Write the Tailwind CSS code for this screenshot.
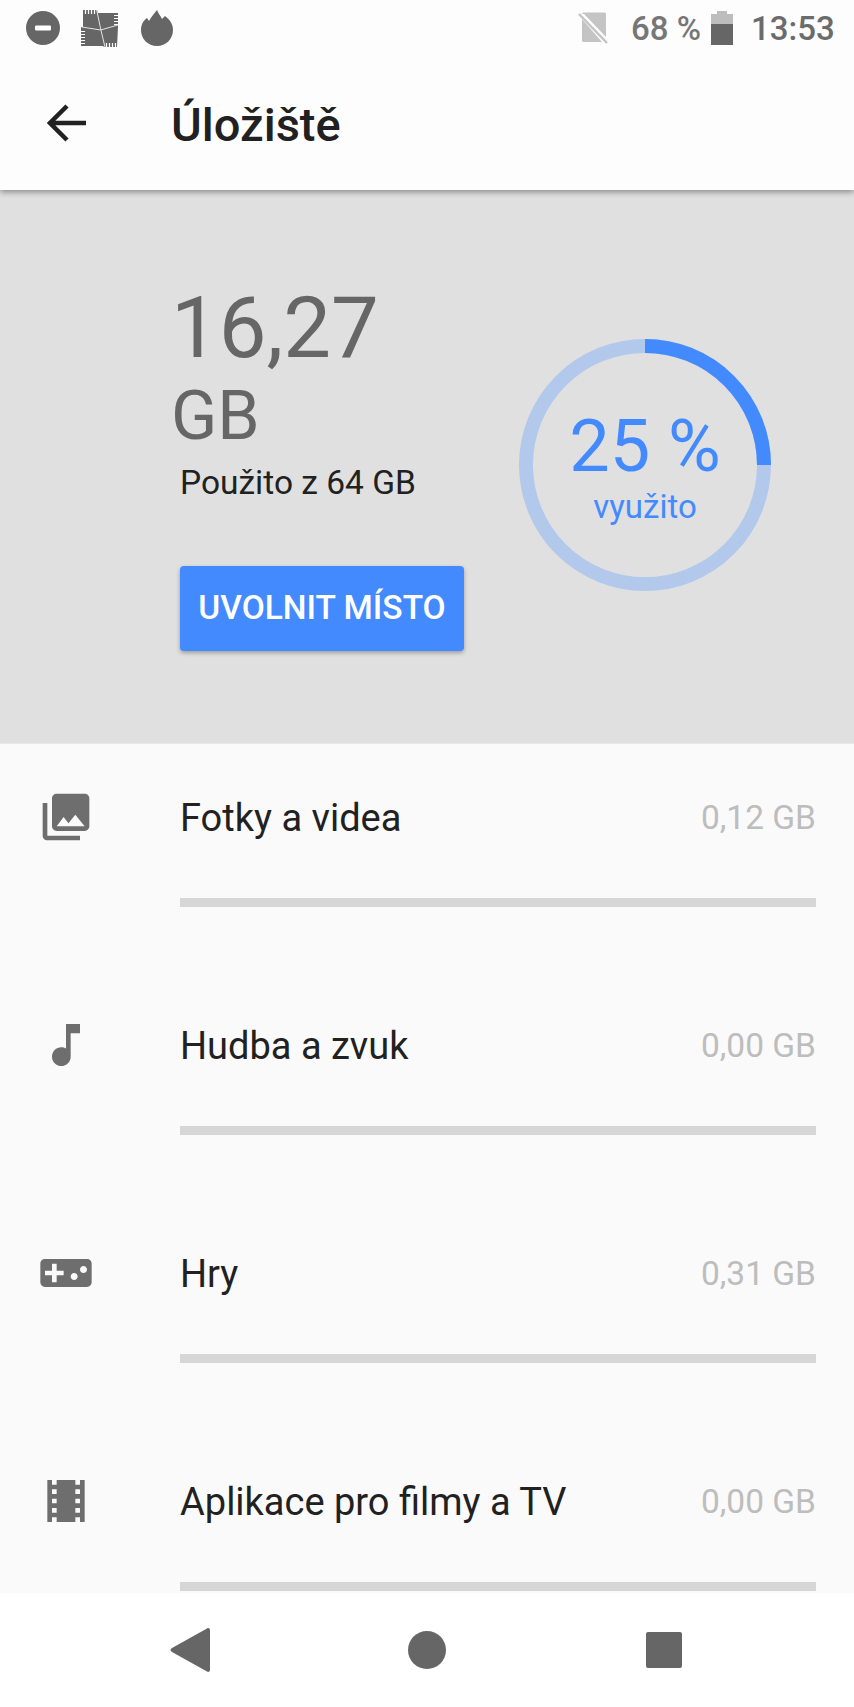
<!DOCTYPE html>
<html lang="cs">
<head>
  <meta charset="UTF-8" />
  <meta name="viewport" content="width=device-width, initial-scale=1.0" />
  <title>Úložiště</title>
  <script src="https://cdn.jsdelivr.net/npm/@tailwindcss/browser@4"></script>
</head>
<body class="bg-white font-['Roboto',sans-serif]">
  <div class="w-[854px] h-[1707px] flex flex-col overflow-hidden">

    <!-- status bar -->
    <div class="relative z-20 h-[56px] flex items-center bg-[#fdfdfd] text-[#6b6b6b]">
      <svg class="ml-[26px] w-[34px] h-[34px]" viewBox="0 0 34 34"><circle cx="17" cy="17" r="17" fill="#666"/><rect x="9" y="14.5" width="16" height="5" rx="1" fill="#fff"/></svg>
      <svg class="ml-[21px] w-[37px] h-[37px]" viewBox="0 0 37 37">
        <path d="M2 0H16L17 3H37V17L36 37H23L22 36H0V17H2Z" fill="#666"/>
        <path d="M4.500 0V4M7.500 0V4M10.500 0V4M13.500 0V4M37 5.500H33M37 8.500H33M37 11.500H33M37 14.500H33M0 21.500H4M0 24.500H4M0 27.500H4M0 30.500H4M0 33.500H4M25.500 37V33M28.500 37V33M31.500 37V33M34.500 37V33" stroke="#fdfdfd" stroke-width="1.200"/>
        <path d="M15.700 0L19.700 19L24 37M0.700 17L19.700 20L37 15" fill="none" stroke="#e4e4e4" stroke-width="1"/>
      </svg>
      <svg class="ml-[23px] w-[32px] h-[36px]" viewBox="0 0 32 36"><path d="M16 36C7 36 0 29 0 20C0 14 3 10 6 8L8 11C10 7 13 4 16 0C17 3 19 5 21 9L24 6C29 10 32 14 32 20C32 29 25 36 16 36Z" fill="#666"/></svg>
      <svg class="ml-[405px] w-[30px] h-[32px]" viewBox="0 0 30 32"><path d="M4 2C4 1 5 0.5 6 0.5H26C27 0.5 28 1 28 2V25L6 2ZM4 7L24 30H6C5 30 4 29.500 4 28.500Z" fill="#c4c4c4"/><path d="M1 2L29 31" stroke="#c4c4c4" stroke-width="2.500"/></svg>
      <span class="ml-[23px] text-[33px] font-medium leading-none text-[#767676]">68 %</span>
      <svg class="ml-[10px] w-[22px] h-[34px]" viewBox="0 0 22 34"><path d="M6 0H16V3H22V13H0V3H6Z" fill="#bdbdbd"/><rect y="13" width="22" height="21" fill="#666"/></svg>
      <span class="ml-[18px] text-[33px] font-medium leading-none">13:53</span>
    </div>

    <!-- toolbar -->
    <div class="relative z-10 h-[134px] flex items-center bg-[#fdfdfd] shadow-[0_2px_6px_rgba(0,0,0,0.4)]">
      <svg class="ml-[47px] w-[40px] h-[38px]" viewBox="0 0 40 38" fill="none" stroke="#212121" stroke-width="4.500"><path d="M39 19H4M20 2L3 19L20 36"/></svg>
      <h1 class="ml-[84px] mt-[2px] text-[47px] font-medium leading-none text-[#212121]">Úložiště</h1>
    </div>

    <!-- summary -->
    <section class="h-[554px] bg-[#e0e0e0] flex border-b border-[#e8e8e8]">
      <div class="ml-[171px] w-[348px] pt-[90px]">
        <div class="text-[85px] leading-[96px] text-[#666]">16,27</div>
        <div class="text-[68px] leading-[80px] text-[#666]">GB</div>
        <div class="ml-[9px] mt-[7px] text-[33.500px] leading-[40px] text-[#212121]">Použito z 64 GB</div>
        <button class="ml-[9px] mt-[63px] w-[284px] h-[85px] rounded bg-[#448aff] text-white text-[33.500px] font-medium shadow-[0_2px_4px_rgba(0,0,0,0.3)]">UVOLNIT MÍSTO</button>
      </div>
      <div class="relative mt-[149px] w-[252px] h-[252px] flex flex-col items-center text-[#448aff]">
        <svg class="absolute inset-0" viewBox="0 0 252 252" fill="none" stroke-width="14">
          <circle cx="126" cy="126" r="119" stroke="#b3c9ec"/>
          <path d="M126 7A119 119 0 0 1 245 126" stroke="#448aff"/>
        </svg>
        <div class="mt-[66px] text-[72px] leading-[84px]">25 %</div>
        <div class="text-[33px] leading-[40px] mt-[-2px]">využito</div>
      </div>
    </section>

    <!-- categories -->
    <main class="flex-1 overflow-hidden bg-[#fafafa]">
      <div class="h-[228px]">
        <div class="h-[146px] flex items-center">
          <svg class="ml-[38px] w-[56px] h-[56px]" viewBox="0 0 24 24" fill="#6e6e6e"><path d="M22 16V4c0-1.1-.9-2-2-2H8c-1.100 0-2 .9-2 2v12c0 1.100.9 2 2 2h12c1.100 0 2-.9 2-2zm-11-4l2.030 2.710L16 11l4 5H8l3-4zM2 6v14c0 1.100.9 2 2 2h14v-2H4V6H2z"/></svg>
          <span class="ml-[86px] mt-[2px] flex-1 text-[38px] text-[#212121]">Fotky a videa</span>
          <span class="mr-[38px] mt-[2px] text-[33.500px] text-[#bdbdbd]">0,12 GB</span>
        </div>
        <div class="ml-[180px] mr-[38px] mt-[8px] h-[9px] bg-[#d6d6d6]"></div>
      </div>
      <div class="h-[228px]">
        <div class="h-[146px] flex items-center">
          <svg class="ml-[38px] w-[56px] h-[56px]" viewBox="0 0 24 24" fill="#6e6e6e"><path d="M12 3v10.550c-.59-.34-1.270-.55-2-.55-2.210 0-4 1.790-4 4s1.790 4 4 4 4-1.790 4-4V7h4V3h-6z"/></svg>
          <span class="ml-[86px] mt-[2px] flex-1 text-[38px] text-[#212121]">Hudba a zvuk</span>
          <span class="mr-[38px] mt-[2px] text-[33.500px] text-[#bdbdbd]">0,00 GB</span>
        </div>
        <div class="ml-[180px] mr-[38px] mt-[8px] h-[9px] bg-[#d6d6d6]"></div>
      </div>
      <div class="h-[228px]">
        <div class="h-[146px] flex items-center">
          <svg class="ml-[38px] w-[56px] h-[56px]" viewBox="0 0 24 24" fill="#6e6e6e"><path d="M21 6H3c-1.100 0-2 .9-2 2v8c0 1.100.9 2 2 2h18c1.100 0 2-.9 2-2V8c0-1.100-.9-2-2-2zm-10 7H8v3H6v-3H3v-2h3V8h2v3h3v2zm4.500 2c-.83 0-1.500-.67-1.500-1.500s.67-1.500 1.500-1.500 1.500.67 1.500 1.500-.67 1.500-1.500 1.500zm4-3c-.83 0-1.500-.67-1.500-1.500S18.670 9 19.500 9s1.500.67 1.500 1.500-.67 1.500-1.500 1.500z"/></svg>
          <span class="ml-[86px] mt-[2px] flex-1 text-[38px] text-[#212121]">Hry</span>
          <span class="mr-[38px] mt-[2px] text-[33.500px] text-[#bdbdbd]">0,31 GB</span>
        </div>
        <div class="ml-[180px] mr-[38px] mt-[8px] h-[9px] bg-[#d6d6d6]"></div>
      </div>
      <div class="h-[228px]">
        <div class="h-[146px] flex items-center">
          <svg class="ml-[38px] w-[56px] h-[56px]" viewBox="0 0 24 24" fill="#6e6e6e"><path d="M18 3v2h-2V3H8v2H6V3H4v18h2v-2h2v2h8v-2h2v2h2V3h-2zM8 17H6v-2h2v2zm0-4H6v-2h2v2zm0-4H6V7h2v2zm10 8h-2v-2h2v2zm0-4h-2v-2h2v2zm0-4h-2V7h2v2z"/></svg>
          <span class="ml-[86px] mt-[2px] flex-1 text-[38px] text-[#212121]">Aplikace pro filmy a TV</span>
          <span class="mr-[38px] mt-[2px] text-[33.500px] text-[#bdbdbd]">0,00 GB</span>
        </div>
        <div class="ml-[180px] mr-[38px] mt-[8px] h-[9px] bg-[#d6d6d6]"></div>
      </div>
    </main>

    <!-- navigation bar -->
    <nav class="h-[114px] bg-white flex justify-center items-center">
      <div class="w-[237px] flex justify-center">
        <svg class="w-[40px] h-[46px]" viewBox="0 0 40 46" fill="#666"><path d="M37 1.500C38.500 .5 40 1.500 40 3V43C40 44.500 38.500 45.500 37 44.500L2 25C0 24 0 22 2 21Z"/></svg>
      </div>
      <div class="w-[237px] flex justify-center">
        <div class="w-[38px] h-[38px] rounded-full bg-[#666]"></div>
      </div>
      <div class="w-[237px] flex justify-center">
        <div class="w-[36px] h-[36px] rounded-[2px] bg-[#666]"></div>
      </div>
    </nav>
  </div>
</body>
</html>
